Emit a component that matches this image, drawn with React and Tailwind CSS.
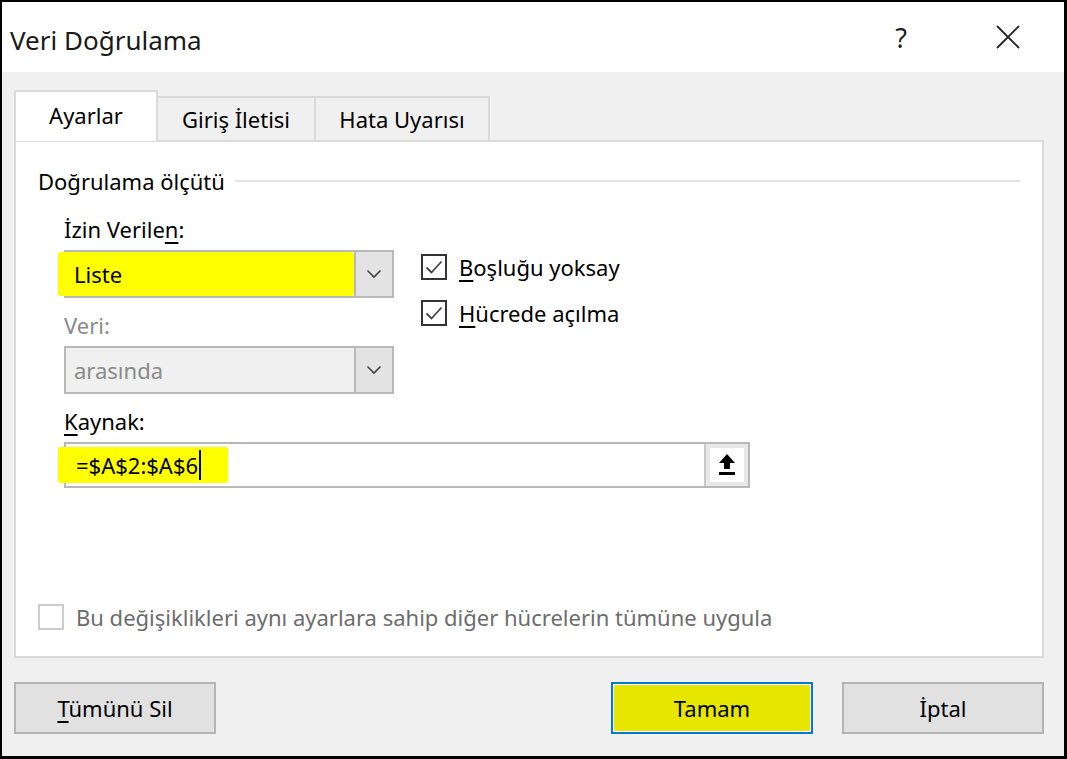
import { useState } from 'react';

const FONT = "font-['Noto_Sans','Open_Sans',sans-serif]";

const Chevron = () => (
  <svg width="16" height="10" viewBox="0 0 16 10" fill="none" stroke="#444" strokeWidth="1.6">
    <path d="M1.5 1.5 8 8l6.5-6.5" />
  </svg>
);

const Check = () => (
  <svg width="20" height="16" viewBox="0 0 20 16" fill="none" stroke="#444" strokeWidth="1.8">
    <path d="M2.5 8.5 7.5 13.5 17.5 2.5" />
  </svg>
);

const CheckBox = ({ checked, disabled }) => (
  <div
    className={`w-[26px] h-[26px] shrink-0 border-2 bg-white flex items-center justify-center ${
      disabled ? 'border-[#cccccc]' : 'border-[#333333]'
    }`}
  >
    {checked && <Check />}
  </div>
);

const Dropdown = ({ value, disabled, highlight }) => (
  <div
    className={`relative flex h-[48px] w-[330px] border-2 border-[#b8b8b8] ${
      disabled ? 'bg-[#f0f0f0]' : 'bg-white'
    }`}
  >
    {highlight && (
      <div className="absolute left-[-8px] top-0 bottom-0 w-[296px] bg-[#ffff00] rounded-[3px]" />
    )}
    <div
      className={`relative flex-1 flex items-center pl-[8px] text-[22px] ${
        disabled ? 'text-[#8a8a8a]' : 'text-black'
      }`}
    >
      {value}
    </div>
    <div className="w-[38px] flex items-center justify-center bg-[#e3e3e3] border-l-2 border-[#b8b8b8]">
      <Chevron />
    </div>
  </div>
);

const UploadIcon = () => (
  <svg width="20" height="24" viewBox="0 0 20 24" fill="#000">
    <path d="M10 1 18 10h-5v6H7v-6H2z" />
    <rect x="2" y="19" width="16" height="3" />
  </svg>
);

const Button = ({ children, primary }) => (
  <button
    className={`h-[52px] w-[202px] text-[22px] text-black ${
      primary
        ? 'border-2 border-[#0078d7] bg-[#e6e600] shadow-[inset_0_0_0_1px_#ffffff]'
        : 'border-2 border-[#b4b4b4] bg-[#e1e1e1]'
    }`}
  >
    {children}
  </button>
);

export default function App() {
  const [tab, setTab] = useState(0);
  const tabs = ['Ayarlar', 'Giriş İletisi', 'Hata Uyarısı'];

  return (
    <div className={`${FONT} w-[1067px] h-[759px] flex flex-col border-black border-t-2 border-l-2 border-r-[3px] border-b-[3px] bg-[#f0f0f0]`}>
      {/* title bar */}
      <div className="h-[70px] bg-white flex items-center pl-[8px] pr-[44px]">
        <div className="flex-1 text-[26px] text-[#1a1a1a] pt-[6px]">Veri Doğrulama</div>
        <div className="text-[27px] text-[#222] w-[30px] text-center mr-[80px] pt-[2px]">?</div>
        <svg width="24" height="24" viewBox="0 0 24 24" stroke="#222" strokeWidth="1.8" fill="none">
          <path d="M1 1l22 22M23 1 1 23" />
        </svg>
      </div>

      <div className="flex-1 flex flex-col pl-[12px] pr-[20px] pt-[18px]">
        {/* tabs */}
        <div className="flex items-end h-[50px]">
          {tabs.map((t, i) =>
            i === tab ? (
              <button
                key={t}
                onClick={() => setTab(i)}
                className="relative z-10 -mb-px h-[51px] w-[144px] bg-white border-2 border-b-0 border-[#dadada] text-[22px] text-black pb-[3px]"
              >
                {t}
              </button>
            ) : (
              <button
                key={t}
                onClick={() => setTab(i)}
                className={`h-[44px] border-2 border-b-0 border-l-0 border-[#dadada] bg-[#f0f0f0] text-[22px] text-black ${
                  i === 1 ? 'w-[158px]' : 'w-[174px]'
                }`}
              >
                {t}
              </button>
            )
          )}
        </div>

        {/* settings panel */}
        <div className="h-[518px] w-[1030px] bg-white border-2 border-[#dadada] pt-[26px] pl-[22px] pr-[22px]">
          <div className="flex items-center h-[26px]">
            <span className="text-[22px] text-black pr-[10px]">Doğrulama ölçütü</span>
            <div className="flex-1 h-[2px] bg-[#e2e2e2]" />
          </div>

          <div className="pl-[26px] mt-[22px] flex">
            <div className="w-[330px] flex flex-col">
              <div className="text-[22px] leading-[26px] text-black">
                İzin Verile<span className="underline underline-offset-[4px]">n</span>:
              </div>
              <div className="mt-[8px]">
                <Dropdown value="Liste" highlight />
              </div>
              <div className="text-[22px] leading-[26px] text-[#8a8a8a] mt-[14px]">Veri:</div>
              <div className="mt-[8px]">
                <Dropdown value="arasında" disabled />
              </div>
            </div>

            <div className="ml-[27px] pt-[38px] flex flex-col gap-[20px]">
              <label className="flex items-center h-[26px] gap-[12px] text-[22px] leading-[26px] text-black">
                <CheckBox checked />
                <span>
                  <span className="underline underline-offset-[4px]">B</span>oşluğu yoksay
                </span>
              </label>
              <label className="flex items-center h-[26px] gap-[12px] text-[22px] leading-[26px] text-black">
                <CheckBox checked />
                <span>
                  <span className="underline underline-offset-[4px]">H</span>ücrede açılma
                </span>
              </label>
            </div>
          </div>

          <div className="pl-[26px] mt-[14px]">
            <div className="text-[22px] leading-[26px] text-black">
              <span className="underline underline-offset-[4px]">K</span>aynak:
            </div>
            <div className="mt-[8px] flex h-[46px] w-[686px] border-2 border-[#b8b8b8] bg-white">
              <div className="relative flex-1 flex items-center pl-[10px]">
                <div className="absolute left-[-8px] top-[3px] bottom-[3px] w-[170px] bg-[#ffff00] rounded-[2px]" />
                <span className="relative text-[22px] text-black">=$A$2:$A$6</span>
                <span className="relative w-[2px] h-[30px] bg-black ml-[1px]" />
              </div>
              <div className="w-[44px] border-l-2 border-[#c8c8c8] bg-[#e8e8e8] flex items-center justify-center">
                <div className="w-[34px] h-[34px] bg-white flex items-center justify-center">
                  <UploadIcon />
                </div>
              </div>
            </div>
          </div>

          <div className="mt-[116px] flex items-center h-[26px] gap-[12px]">
            <CheckBox disabled />
            <span className="text-[22px] leading-[26px] text-[#6d6d6d]">
              Bu değişiklikleri aynı ayarlara sahip diğer hücrelerin tümüne uygula
            </span>
          </div>
        </div>

        {/* footer buttons */}
        <div className="flex items-center mt-[24px]">
          <Button>
            <span className="underline underline-offset-[4px]">T</span>ümünü Sil
          </Button>
          <div className="flex-1" />
          <Button primary>Tamam</Button>
          <div className="w-[29px]" />
          <Button>İptal</Button>
        </div>
      </div>
    </div>
  );
}
